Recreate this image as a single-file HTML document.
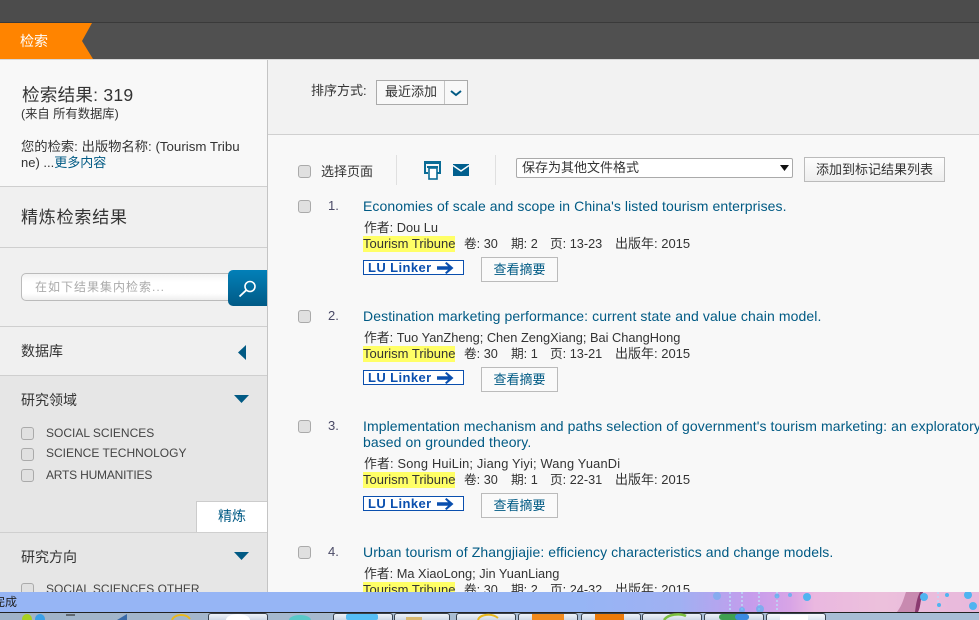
<!DOCTYPE html>
<html lang="zh"><head><meta charset="utf-8"><title>检索</title>
<style>
*{box-sizing:border-box}
html,body{margin:0;padding:0}
body{width:979px;height:620px;overflow:hidden;position:relative;background:#f8f8f8;font-family:"Liberation Sans","Noto Sans CJK SC",sans-serif;font-size:12px;color:#333}
.a{position:absolute;white-space:nowrap}
.l{position:absolute;left:0;width:267px;height:1px;background:#cfcfcf}
.cb{position:absolute;width:13px;height:13px;border:1px solid #aaa;border-radius:3px;background:#e0e0e0}
.t{color:#005a84;font-size:14px;letter-spacing:.08px}
.n{font-size:13px;line-height:16px;color:#4a4a66}
.au{font-size:12.8px;line-height:16px}
.row{position:absolute;left:0;width:979px;height:16px;font-size:12.7px;line-height:16px}
.row span{position:absolute;top:0;white-space:nowrap}
.row .y{left:363px;width:92px;height:16px;background:#ffff66;font-size:13px}
.lu{position:absolute;width:101px;height:15px;border:1px solid #0a4fae;background:#fff;color:#0a4fae;font-weight:bold;font-size:13px;line-height:13px;padding-left:4px;letter-spacing:.4px}
.lu svg{position:absolute;left:73px;top:1px}
.btn{position:absolute;width:77px;height:25px;border:1px solid #bbb;background:#fafafa;color:#005a84;text-align:center;line-height:23px;font-size:13px}
.tb{position:absolute;top:613px;height:7px;width:60px;border:1px solid #39424e;border-bottom:0;border-radius:3px 3px 0 0;background:linear-gradient(#eef2f8,#cfd9e6)}
</style></head><body>

<div class="a" style="left:0;top:0;width:979px;height:22px;background:#4c4c4c"></div>
<div class="a" style="left:0;top:22px;width:979px;height:1px;background:#3a3a3a"></div>
<div class="a" style="left:0;top:23px;width:979px;height:36px;background:#505050"></div>
<svg class="a" style="left:0;top:23px" width="94" height="36"><polygon points="0,0 92,0 82,18 93,36 0,36" fill="#ff8400"/></svg>
<div class="a" style="left:20px;top:31px;color:#fff;font-size:14px;line-height:20px">检索</div>
<div class="a" style="left:0;top:59px;width:979px;height:1px;background:#d8d8d8"></div>

<!-- right top -->
<div class="a" style="left:268px;top:60px;width:711px;height:74px;background:#f2f2f2"></div>
<div class="a" style="left:268px;top:134px;width:711px;height:1px;background:#d0d0d0"></div>

<!-- left panel -->
<div class="a" style="left:0;top:60px;width:267px;height:126px;background:#f8f8f8"></div>
<div class="a" style="left:0;top:186px;width:267px;height:190px;background:#f0f0f0"></div>
<div class="a" style="left:0;top:376px;width:267px;height:216px;background:#e6e6e6"></div>
<div class="a" style="left:267px;top:60px;width:1px;height:532px;background:#c4c4c4"></div>
<div class="l" style="top:186px"></div>
<div class="l" style="top:247px"></div>
<div class="l" style="top:326px"></div>
<div class="l" style="top:375px"></div>
<div class="l" style="top:532px"></div>

<div class="a" style="left:22px;top:84px;font-size:17.6px;line-height:22px;letter-spacing:.2px">检索结果: 319</div>
<div class="a" style="left:21px;top:106px;line-height:16px;font-size:12.3px">(来自 所有数据库)</div>
<div class="a" style="left:21px;top:139px;line-height:16px;font-size:13.3px">您的检索: 出版物名称: (Tourism Tribu</div>
<div class="a" style="left:21px;top:155px;line-height:16px;font-size:13px">ne) ...<span style="color:#005a84">更多内容</span></div>
<div class="a" style="left:21px;top:207px;font-size:17px;line-height:22px;letter-spacing:.8px">精炼检索结果</div>

<div class="a" style="left:21px;top:273px;width:215px;height:28px;border:1px solid #bbb;border-radius:5px;background:linear-gradient(#f2f2f2,#fff 30%,#fff 75%,#eee);color:#aaa;line-height:26px;padding-left:13px;letter-spacing:1px">在如下结果集内检索...</div>
<div class="a" style="left:228px;top:270px;width:39px;height:36px;border-radius:5px 0 0 5px;background:linear-gradient(#0280b8,#015a86)"></div>
<svg class="a" style="left:238px;top:279px" width="20" height="20" fill="none" stroke="#fff"><circle cx="12" cy="7.5" r="5" stroke-width="1.6"/><line x1="8.2" y1="11.2" x2="1.5" y2="17.5" stroke-width="1.8"/></svg>

<div class="a" style="left:21px;top:341px;font-size:14px;line-height:20px">数据库</div>
<svg class="a" style="left:238px;top:345px" width="8" height="15"><polygon points="8,0 8,15 0,7.5" fill="#015a84"/></svg>

<div class="a" style="left:21px;top:390px;font-size:14px;line-height:20px">研究领域</div>
<svg class="a" style="left:234px;top:395px" width="15" height="8"><polygon points="0,0 15,0 7.5,8" fill="#015a84"/></svg>
<div class="cb" style="left:21px;top:427px"></div><div class="a" style="left:46px;top:425px;line-height:16px;color:#444">SOCIAL SCIENCES</div>
<div class="cb" style="left:21px;top:448px"></div><div class="a" style="left:46px;top:445px;line-height:16px;color:#444">SCIENCE TECHNOLOGY</div>
<div class="cb" style="left:21px;top:469px"></div><div class="a" style="left:46px;top:467px;line-height:16px;color:#444;letter-spacing:-.2px">ARTS HUMANITIES</div>
<div class="a" style="left:196px;top:501px;width:71px;height:31px;background:#fff;border:1px solid #ccc;border-right:0;border-bottom:0;color:#005a84;font-size:14px;line-height:29px;text-align:center">精炼</div>
<div class="a" style="left:21px;top:547px;font-size:14px;line-height:20px">研究方向</div>
<svg class="a" style="left:234px;top:552px" width="15" height="8"><polygon points="0,0 15,0 7.5,8" fill="#015a84"/></svg>
<div class="cb" style="left:21px;top:583px"></div><div class="a" style="left:46px;top:581px;line-height:16px;color:#444">SOCIAL SCIENCES OTHER</div>

<!-- sort -->
<div class="a" style="left:311px;top:82px;line-height:18px;font-size:13px">排序方式:</div>
<div class="a" style="left:376px;top:80px;width:92px;height:25px;border:1px solid #aaa;background:#f8f8f8"></div>
<div class="a" style="left:444px;top:81px;width:1px;height:23px;background:#c4c4c4"></div>
<div class="a" style="left:385px;top:83px;line-height:18px;font-size:13px">最近添加</div>
<svg class="a" style="left:450px;top:90px" width="12" height="7" fill="none"><polyline points="1,1 6,5 11,1" stroke="#015a84" stroke-width="2"/></svg>

<!-- toolbar -->
<div class="cb" style="left:298px;top:165px"></div>
<div class="a" style="left:321px;top:164px;line-height:16px;font-size:13px">选择页面</div>
<div class="a" style="left:396px;top:155px;width:1px;height:30px;background:#e0e0e0"></div>
<div class="a" style="left:495px;top:155px;width:1px;height:30px;background:#e0e0e0"></div>
<svg class="a" style="left:424px;top:161px" width="17" height="19" fill="none"><path d="M1 12V1H16V12" stroke="#0a6c96" stroke-width="2"/><rect x="0" y="0" width="17" height="3" fill="#0a6c96"/><rect x="0" y="11" width="4" height="2" fill="#0a6c96"/><rect x="13" y="11" width="4" height="2" fill="#0a6c96"/><rect x="3" y="5" width="11" height="2" fill="#0a6c96"/><rect x="5" y="7" width="8" height="11" fill="#fff" stroke="#0a6c96" stroke-width="1.6"/></svg>
<svg class="a" style="left:453px;top:164px" width="16" height="12"><rect width="16" height="12" fill="#015f8e"/><polyline points="0,1.5 8,7 16,1.5" fill="none" stroke="#fff" stroke-width="1.4"/></svg>
<div class="a" style="left:516px;top:158px;width:277px;height:20px;border:1px solid #aaa;border-radius:2px;background:#fff;line-height:18px;padding-left:5px;font-size:13px">保存为其他文件格式</div>
<svg class="a" style="left:780px;top:165px" width="10" height="7"><polygon points="0,0 9,0 4.5,6" fill="#111"/></svg>
<div class="a" style="left:804px;top:157px;width:141px;height:25px;border:1px solid #bbb;background:linear-gradient(#fdfdfd,#eee);line-height:23px;text-align:center;font-size:13px">添加到标记结果列表</div>

<!-- result 1 -->
<div class="cb" style="left:298px;top:200px"></div>
<div class="a n" style="left:328px;top:198px">1.</div>
<div class="a t" style="left:363px;top:198px;line-height:16px">Economies of scale and scope in China's listed tourism enterprises.</div>
<div class="a au" style="left:364px;top:220px">作者: Dou Lu</div>
<div class="row" style="top:236px"><span class="y">Tourism Tribune</span><span style="left:464px">卷: 30</span><span style="left:511px">期: 2</span><span style="left:550px">页: 13-23</span><span style="left:615px;font-size:13px">出版年: 2015</span></div>
<div class="lu" style="left:363px;top:260px">LU Linker<svg width="20" height="12"><path d="M0 4.2H11L8 1.2L9.5 0L16.5 6L9.5 12L8 10.8L11 7.8H0Z" fill="#0a4fae"/></svg></div>
<div class="btn" style="left:481px;top:257px">查看摘要</div>

<!-- result 2 -->
<div class="cb" style="left:298px;top:310px"></div>
<div class="a n" style="left:328px;top:308px">2.</div>
<div class="a t" style="left:363px;top:308px;line-height:16px;letter-spacing:.1px">Destination marketing performance: current state and value chain model.</div>
<div class="a au" style="left:364px;top:330px">作者: Tuo YanZheng; Chen ZengXiang; Bai ChangHong</div>
<div class="row" style="top:346px"><span class="y">Tourism Tribune</span><span style="left:464px">卷: 30</span><span style="left:511px">期: 1</span><span style="left:550px">页: 13-21</span><span style="left:615px;font-size:13px">出版年: 2015</span></div>
<div class="lu" style="left:363px;top:370px">LU Linker<svg width="20" height="12"><path d="M0 4.2H11L8 1.2L9.5 0L16.5 6L9.5 12L8 10.8L11 7.8H0Z" fill="#0a4fae"/></svg></div>
<div class="btn" style="left:481px;top:367px">查看摘要</div>

<!-- result 3 -->
<div class="cb" style="left:298px;top:420px"></div>
<div class="a n" style="left:328px;top:418px">3.</div>
<div class="a t" style="left:363px;top:418px;line-height:16px">Implementation mechanism and paths selection of government's tourism marketing: an exploratory study</div>
<div class="a t" style="left:363px;top:434px;line-height:16px">based on grounded theory.</div>
<div class="a au" style="left:364px;top:456px;letter-spacing:.2px">作者: Song HuiLin; Jiang Yiyi; Wang YuanDi</div>
<div class="row" style="top:472px"><span class="y">Tourism Tribune</span><span style="left:464px">卷: 30</span><span style="left:511px">期: 1</span><span style="left:550px">页: 22-31</span><span style="left:615px;font-size:13px">出版年: 2015</span></div>
<div class="lu" style="left:363px;top:496px">LU Linker<svg width="20" height="12"><path d="M0 4.2H11L8 1.2L9.5 0L16.5 6L9.5 12L8 10.8L11 7.8H0Z" fill="#0a4fae"/></svg></div>
<div class="btn" style="left:481px;top:493px">查看摘要</div>

<!-- result 4 -->
<div class="cb" style="left:298px;top:546px"></div>
<div class="a n" style="left:328px;top:544px">4.</div>
<div class="a t" style="left:363px;top:544px;line-height:16px">Urban tourism of Zhangjiajie: efficiency characteristics and change models.</div>
<div class="a au" style="left:364px;top:566px">作者: Ma XiaoLong; Jin YuanLiang</div>
<div class="row" style="top:582px"><span class="y">Tourism Tribune</span><span style="left:464px">卷: 30</span><span style="left:511px">期: 2</span><span style="left:550px">页: 24-32</span><span style="left:615px;font-size:13px">出版年: 2015</span></div>

<!-- status bar -->
<div class="a" style="left:0;top:592px;width:979px;height:20px;background:linear-gradient(90deg,#96b5f5 0,#96b5f5 580px,#a0b0f2 680px,#c59cec 750px,#d8a4e6 790px,#eab8e0 815px,#ecc0dc 880px,#e8b8dc 979px)"></div>
<svg class="a" style="left:0;top:592px" width="979" height="20">
<path d="M897 20C903 12 904 5 906 0H923C920 8 921 14 918 20Z" fill="#c88ab0"/><path d="M915 20C916 12 917 6 920 0H923C920 8 921 14 918 20Z" fill="#8a3a70"/>
<g stroke="#bcd8f8" stroke-width="2" stroke-dasharray="2 2" opacity=".8"><line x1="730" y1="0" x2="730" y2="20"/><line x1="742" y1="0" x2="742" y2="20"/><line x1="759" y1="0" x2="759" y2="20"/><line x1="777" y1="0" x2="777" y2="20"/><line x1="938" y1="0" x2="938" y2="20"/></g>
<g fill="#4fb4f0"><circle cx="717" cy="4" r="4" opacity=".45"/><circle cx="777" cy="4" r="2.5" opacity=".7"/><circle cx="790" cy="3" r="2" opacity=".7"/><circle cx="807" cy="5" r="4"/><circle cx="924" cy="5" r="4"/><circle cx="939" cy="13" r="2"/><circle cx="947" cy="3" r="2"/><circle cx="968" cy="3" r="4"/><circle cx="973" cy="14" r="4"/><circle cx="760" cy="17" r="4" opacity=".6"/><circle cx="742" cy="18" r="3" opacity=".6"/></g></svg>
<div class="a" style="left:-7px;top:594px;font-size:12px;line-height:16px;color:#222">完成</div>
<div class="a" style="left:0;top:612px;width:979px;height:8px;border-top:1px solid #222;background:linear-gradient(90deg,#9fb2c8,#a9bdd3 50%,#a8bdd6)"></div>

<!-- taskbar buttons -->
<div class="tb" style="left:208px"></div>
<div class="tb" style="left:333px"></div>
<div class="tb" style="left:394px;width:56px"></div>
<div class="tb" style="left:456px"></div>
<div class="tb" style="left:518px"></div>
<div class="tb" style="left:581px"></div>
<div class="tb" style="left:642px"></div>
<div class="tb" style="left:704px"></div>
<div class="tb" style="left:766px;background:linear-gradient(#f6f9fc,#dde6f0)"></div>
<svg class="a" style="left:0;top:613px" width="979" height="7">
<circle cx="27" cy="6" r="5" fill="#a8d020"/><circle cx="40" cy="6" r="5" fill="#3aa0e8"/><rect x="66" y="1" width="9" height="2" fill="#333" opacity=".6"/><path d="M117 7L127 1V7Z" fill="#3a6aa8"/><path d="M172 7C174 1 186 0 190 6" fill="none" stroke="#e8b820" stroke-width="2"/>
<ellipse cx="238" cy="7" rx="12" ry="6" fill="#fff"/><ellipse cx="300" cy="7" rx="11" ry="5" fill="#59c8c8"/>
<rect x="346" y="1" width="32" height="6" rx="2" fill="#55bdf5"/><rect x="406" y="4" width="16" height="3" fill="#d8b870"/>
<path d="M478 7C480 1 492 0 498 5" fill="none" stroke="#e8b820" stroke-width="2"/>
<rect x="532" y="1" width="32" height="6" fill="#f18a1e"/><rect x="595" y="1" width="29" height="6" fill="#ec7a0a"/>
<path d="M664 7C668 1 680 0 686 3" fill="none" stroke="#7cc040" stroke-width="2.5"/>
<rect x="719" y="1" width="30" height="6" rx="3" fill="#3f9f50"/><rect x="735" y="1" width="14" height="6" rx="3" fill="#3a8ae0"/>
<rect x="780" y="2" width="28" height="5" fill="#fff"/></svg>
</body></html>
